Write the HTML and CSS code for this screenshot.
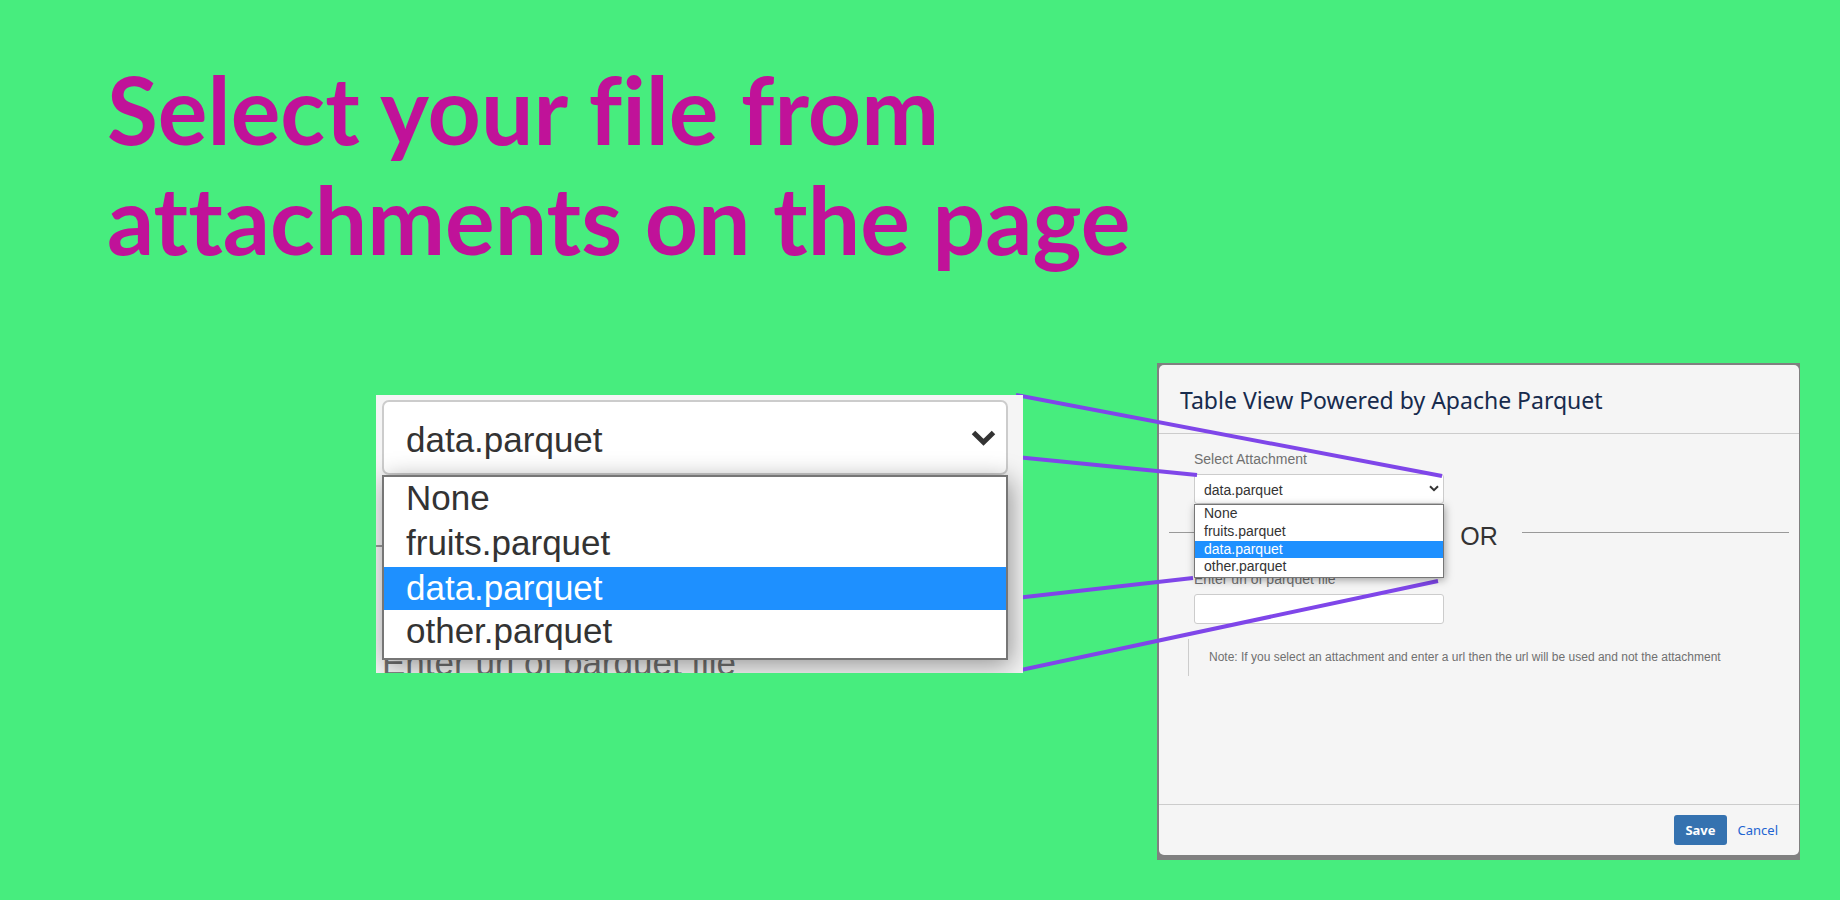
FILE: index.html
```html
<!DOCTYPE html>
<html lang="en">
<head>
<meta charset="utf-8">
<title>Select your file from attachments on the page</title>
<link rel="stylesheet" href="styles.css">
</head>
<body>
<main class="slide">
  <h1 class="headline">Select your file from<br>attachments on the page</h1>
  <div class="stage">
    <section class="zoomed" aria-label="Attachment picker, enlarged">
      <div class="picker">
        <select class="picker-select" aria-label="Attachment">
          <option>None</option>
          <option>fruits.parquet</option>
          <option selected>data.parquet</option>
          <option>other.parquet</option>
        </select>
        <svg class="picker-arrow" viewBox="0 0 10 7" aria-hidden="true"><path d="M1 1.3 5 5.2 9 1.3"/></svg>
        <ul class="picker-list">
          <li>None</li>
          <li>fruits.parquet</li>
          <li class="active">data.parquet</li>
          <li>other.parquet</li>
        </ul>
      </div>
      <hr class="zoomed-rule">
      <p class="zoomed-label">Enter url of parquet file</p>
    </section>

    <section class="backdrop">
      <form class="dialog">
        <header class="dialog-header"><h2 class="dialog-title">Table View Powered by Apache Parquet</h2></header>
        <div class="dialog-body">
          <div class="field">
            <label class="label" for="attachment">Select Attachment</label>
            <div class="picker">
              <select class="picker-select" id="attachment">
                <option>None</option>
                <option>fruits.parquet</option>
                <option selected>data.parquet</option>
                <option>other.parquet</option>
              </select>
              <svg class="picker-arrow" viewBox="0 0 10 7" aria-hidden="true"><path d="M1 1.3 5 5.2 9 1.3"/></svg>
              <ul class="picker-list">
                <li>None</li>
                <li>fruits.parquet</li>
                <li class="active">data.parquet</li>
                <li>other.parquet</li>
              </ul>
            </div>
          </div>
          <div class="divider"><hr><span>OR</span><hr></div>
          <div class="field">
            <label class="label" for="url">Enter url of parquet file</label>
            <input class="url" id="url" type="text">
          </div>
          <p class="note">Note: If you select an attachment and enter a url then the url will be used and not the attachment</p>
        </div>
        <footer class="dialog-footer">
          <button class="save" type="button">Save</button>
          <a class="cancel" href="#">Cancel</a>
        </footer>
      </form>
    </section>

    <svg class="guides" viewBox="0 0 1424 497" preserveAspectRatio="none" aria-hidden="true">
      <path d="M640 32 1066 113M640 94 821 112M640 235 817 215M640 308 1062 218"/>
    </svg>
  </div>
</main>
</body>
</html>
```
FILE: styles.css
```css
* { box-sizing: border-box; }

body {
  margin: 0;
  min-height: 100vh;
  background: #47ed7e;
  font-family: "Liberation Sans", Arial, sans-serif;
  color: #333;
}

h1, h2, p, ul { margin: 0; padding: 0; }

.slide { padding: 54px 40px 40px 107px; }

.headline {
  color: #c01299;
  font: 700 93px/110px Lato, sans-serif;
  font-variant-ligatures: none;
}

.stage {
  position: relative;
  display: grid;
  grid-template-columns: 647fr 134fr 643fr;
  align-items: start;
  margin: 89px 0 0 269px;
}

.guides {
  position: absolute;
  inset: 0;
  width: 100%;
  height: 100%;
  pointer-events: none;
}

.guides path {
  fill: none;
  stroke: #7f46e9;
  stroke-width: 4;
  vector-effect: non-scaling-stroke;
}

/* Attachment picker */
.picker {
  position: relative;
  font-size: 14px;
}

.picker-select {
  display: block;
  appearance: none;
  width: 100%;
  height: 30px;
  padding: 2px 9px 0;
  border: 1px solid #ccc;
  border-radius: 3px;
  background: #fff;
  color: #333;
  font: inherit;
}

.picker-arrow {
  position: absolute;
  top: 11px;
  right: 5px;
  width: 10px;
  height: 7px;
}

.picker-arrow path {
  fill: none;
  stroke: #333;
  stroke-width: 2;
}

.picker-list {
  position: absolute;
  top: 100%;
  left: 0;
  right: 0;
  z-index: 1;
  padding-bottom: 2px;
  border: 1px solid #767676;
  background: #fff;
  box-shadow: 1px 2px 8px rgba(0, 0, 0, 0.35);
  line-height: 16px;
  list-style: none;
}

.picker-list li { padding: 0 9px 2px; }
.picker-list .active { background: #1e90ff; color: #fff; }
.picker-list .active, .picker-list .active + li { padding-bottom: 0; line-height: 17px; }

/* Enlarged copy of the picker */
.zoomed {
  position: relative;
  z-index: 2;
  grid-column: 1;
  height: 278px;
  margin-top: 32px;
  padding: 5px 15px 0 6px;
  overflow: hidden;
  background: #f5f5f5;
}

.zoomed .picker { font-size: 35px; }

.zoomed .picker-select {
  height: 75px;
  padding: 4px 22px 0;
  border-width: 2px;
  border-radius: 7px;
}

.zoomed .picker-arrow {
  top: 29px;
  right: 12px;
  width: 25px;
  height: 18px;
}

.zoomed .picker-list {
  padding-bottom: 5px;
  border-width: 2px;
  box-shadow: 3px 5px 24px rgba(0, 0, 0, 0.4);
  line-height: 41px;
}

.zoomed .picker-list li { padding: 0 22px 4px; }

.zoomed .picker-list .active,
.zoomed .picker-list .active + li {
  padding-bottom: 2px;
  line-height: 41px;
}

.zoomed-rule {
  margin: 70px -16px 0 -6px;
  border: 0;
  border-top: 2px solid #999;
  width: 24px;
}

.zoomed-label {
  margin-top: 96px;
  color: #707070;
  font-size: 35px;
  line-height: 40px;
}

/* Dialog */
.backdrop {
  grid-column: 3;
  padding: 2px 1px 5px 2px;
  background: #808080;
}

.dialog {
  display: flex;
  flex-direction: column;
  min-height: 490px;
  border-radius: 5px;
  background: #f5f5f5;
}

.dialog-header {
  padding: 21px 21px 19px;
  border-bottom: 1px solid #ccc;
}

.dialog-title {
  color: #172b4d;
  font: 400 23px/28px "Noto Sans", sans-serif;
}

.dialog-body {
  flex: 1;
  padding: 17px 10px 0;
}

.field {
  width: 250px;
  margin-left: 25px;
}

.label {
  display: block;
  margin-bottom: 7px;
  color: #707070;
  font-size: 14px;
  line-height: 16px;
}

.divider {
  display: flex;
  gap: 24px;
  margin: 18px 0 21px;
  font-size: 25px;
  line-height: 28px;
}

.divider hr {
  flex: 1;
  margin: 10px 0 0;
  border: 0;
  border-top: 1px solid #999;
}

.url {
  display: block;
  width: 100%;
  height: 30px;
  border: 1px solid #ccc;
  border-radius: 3px;
  background: #fff;
}

.note {
  margin: 15px 0 0 19px;
  padding: 0 20px;
  border-left: 1px solid #ccc;
  color: #707070;
  font-size: 12px;
  line-height: 37px;
}

.dialog-footer {
  display: flex;
  justify-content: flex-end;
  align-items: center;
  gap: 11px;
  padding: 10px 21px;
  border-top: 1px solid #ccc;
  font: 13px "Noto Sans", sans-serif;
}

.save {
  height: 30px;
  padding: 0 11px;
  border: 0;
  border-radius: 3px;
  background: #3572b0;
  color: #fff;
  font: 700 13px "Noto Sans", sans-serif;
}

.cancel {
  color: #2264d1;
  text-decoration: none;
}
```
